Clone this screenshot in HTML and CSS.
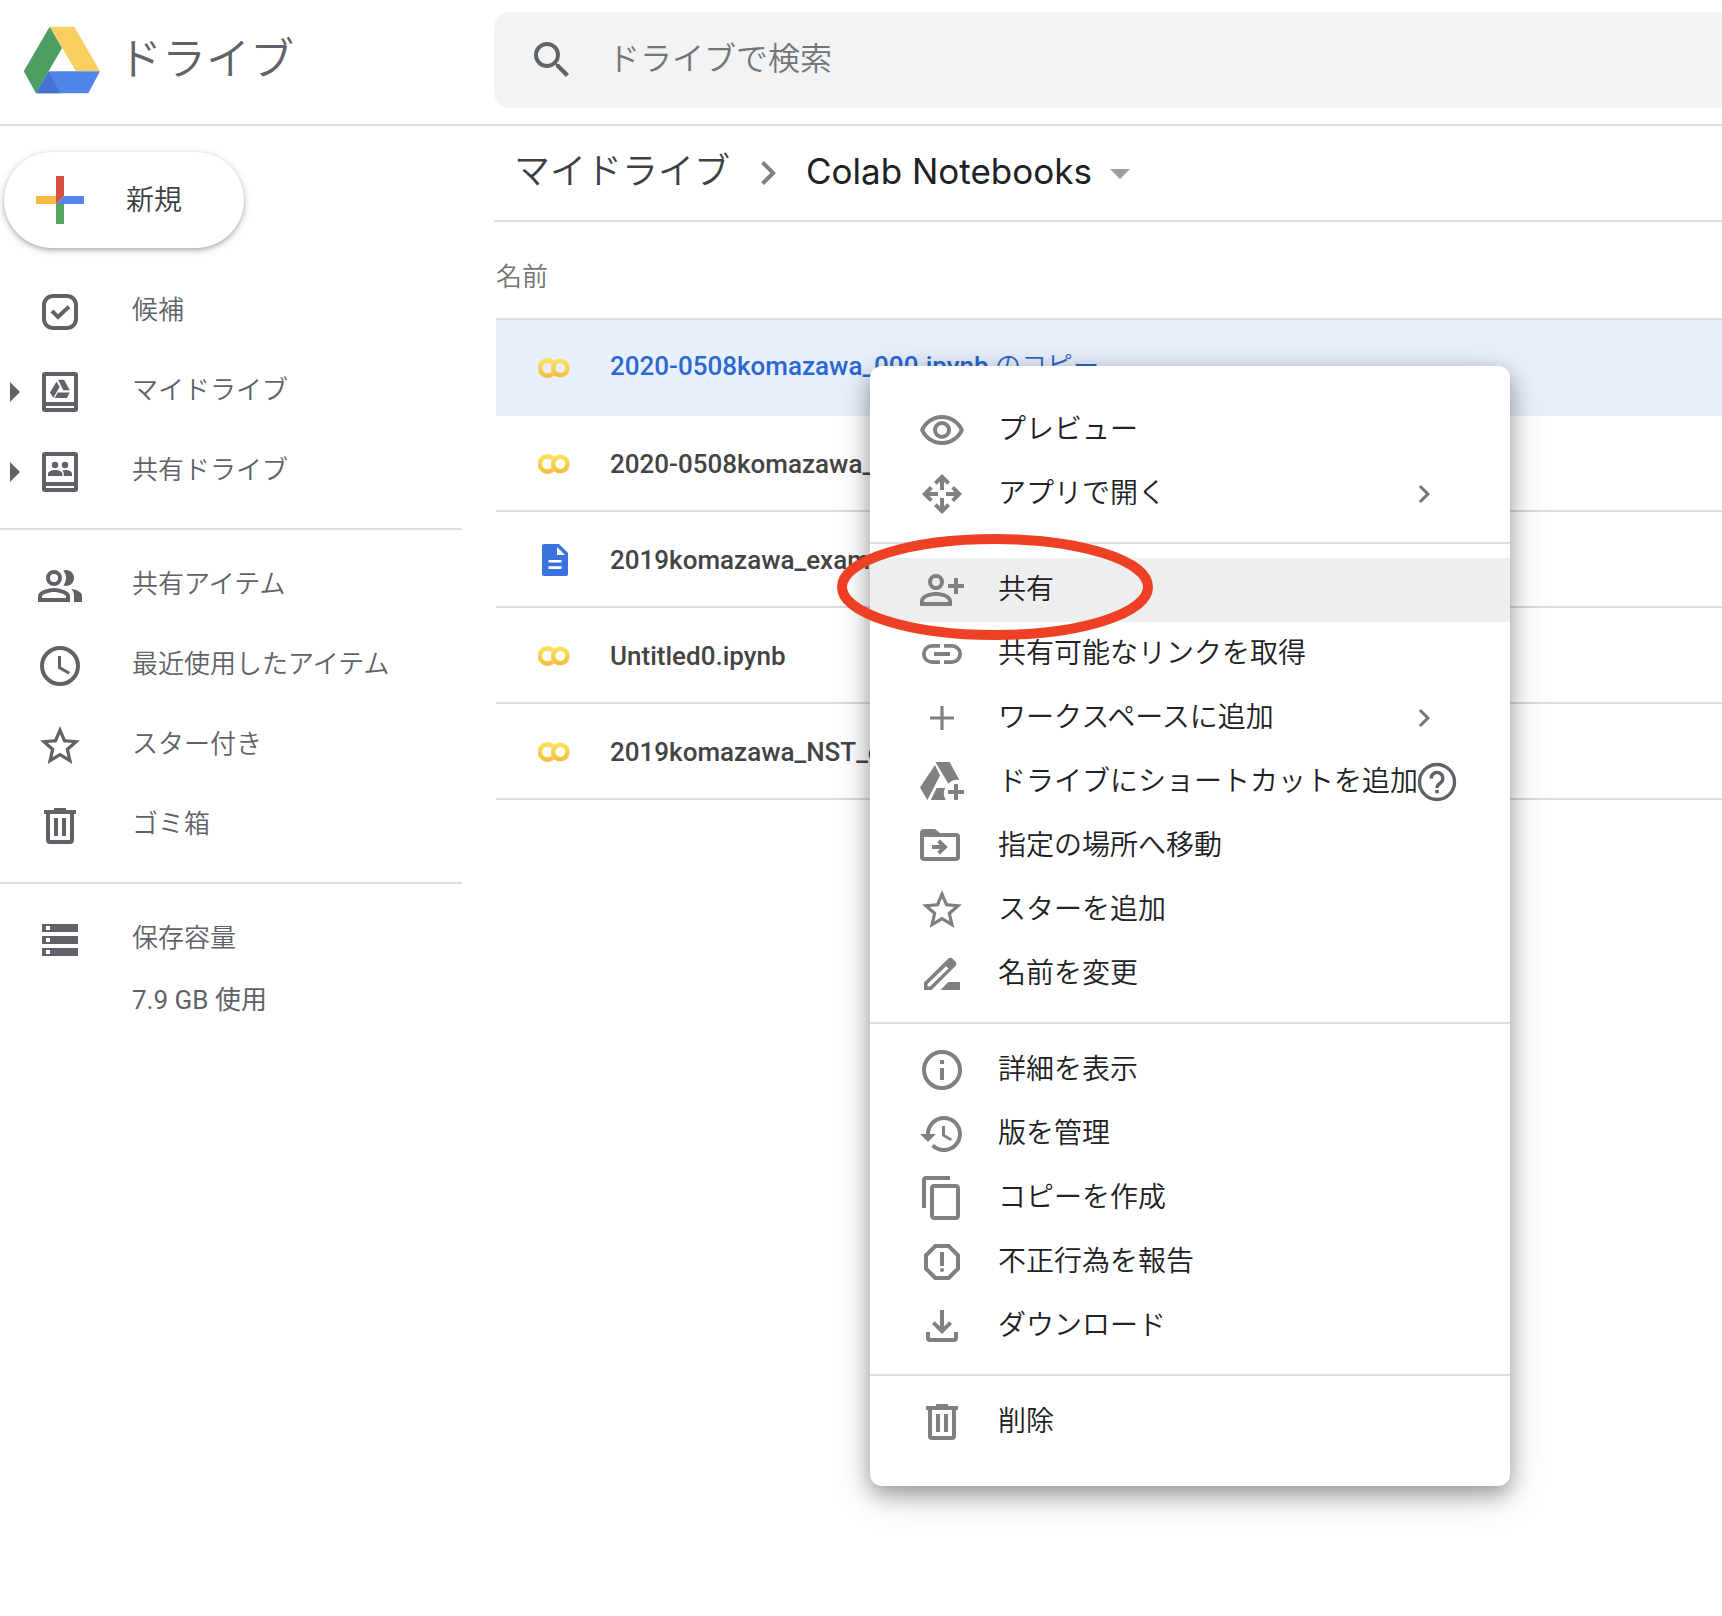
FILE: index.html
```html
<!DOCTYPE html>
<html lang="ja">
<head>
<meta charset="utf-8">
<title>Colab Notebooks - ドライブ</title>
<link rel="stylesheet" href="styles.css">
</head>
<body>
<svg class="sprite" aria-hidden="true">
  <defs>
    <linearGradient id="gold" x1="0" y1="0" x2="0" y2="1">
      <stop offset="0" stop-color="#fbe05c"/><stop offset="1" stop-color="#f5bf41"/>
    </linearGradient>
    <symbol id="colab" viewBox="0 0 32 32">
      <path d="M14.5 10.3A7.6 7.6 0 1 0 14.5 21.7" fill="none" stroke="url(#gold)" stroke-width="4.6"/>
      <circle cx="22.3" cy="16" r="7.2" fill="none" stroke="url(#gold)" stroke-width="4.6"/>
    </symbol>
    <symbol id="star" viewBox="0 0 24 24"><path d="M22 9.24l-7.19-.62L12 2 9.19 8.63 2 9.24l5.46 4.73L5.82 21 12 17.27 18.18 21l-1.63-7.03L22 9.24zM12 15.4l-3.76 2.27 1-4.28-3.32-2.88 4.38-.38L12 6.1l1.71 4.04 4.38.38-3.32 2.88 1 4.28L12 15.4z"/></symbol>
    <symbol id="trash" viewBox="0 0 24 24"><path fill-rule="evenodd" d="M9 3h6v1h5v2h-1v13a2 2 0 0 1-2 2H7a2 2 0 0 1-2-2V6H4V4h5zM7 6v13h10V6zM9 8h2v9H9zM13 8h2v9h-2z"/></symbol>
    <symbol id="chevron" viewBox="0 0 24 24"><path d="M10 6L8.590 7.410 13.170 12l-4.580 4.590L10 18l6-6z"/></symbol>
    <symbol id="caret" viewBox="0 0 24 24"><path d="M10 17l5-5-5-5z"/></symbol>
  </defs>
</svg>

<header class="topbar">
  <a class="brand" href="#">
    <svg class="logo" viewBox="22 20 80 80" aria-hidden="true">
      <path fill="#f9cf60" d="M49.700 26.700H74.300L100 71.300H76z"/>
      <path fill="#4f86ec" d="M48.700 71.300H100L88.300 93.300H36z"/>
      <path fill="#4673d2" d="M48.700 71.300L60 93.300H36z"/>
      <path fill="#4c9e63" d="M49.700 26.700L62 48 36 93.300 23.700 71.300z"/>
    </svg>
    <span>ドライブ</span>
  </a>
  <form class="search" role="search">
    <svg class="icon" viewBox="0 0 24 24" aria-hidden="true"><path d="M15.500 14h-.79l-.28-.27A6.471 6.471 0 0 0 16 9.500 6.500 6.500 0 1 0 9.500 16c1.610 0 3.090-.59 4.230-1.570l.27.28v.79l5 4.990L20.490 19l-4.990-5zm-6 0C7.010 14 5 11.990 5 9.500S7.010 5 9.500 5 14 7.010 14 9.500 11.990 14 9.500 14z"/></svg>
    <input type="search" placeholder="ドライブで検索" aria-label="ドライブで検索">
  </form>
</header>

<div class="layout">
  <aside class="sidebar">
    <button class="new" type="button">
      <svg class="icon" viewBox="0 0 48 48" aria-hidden="true">
        <path fill="#f3bb41" d="M0 20h20v8H0z"/><path fill="#56a45f" d="M20 28h8v20h-8z"/>
        <path fill="#5086ec" d="M28 20h20v8H20z"/><path fill="#d8503f" d="M20 0h8v20l-8 8z"/>
      </svg>
      <span>新規</span>
    </button>
    <nav>
      <ul class="group">
        <li><span class="expand"></span><a href="#"><svg class="icon" viewBox="0 0 24 24"><path fill-rule="evenodd" d="M8.500 3h7A5.500 5.500 0 0 1 21 8.500v7a5.500 5.500 0 0 1-5.500 5.500h-7A5.500 5.500 0 0 1 3 15.500v-7A5.500 5.500 0 0 1 8.500 3zm0 2A3.500 3.500 0 0 0 5 8.500v7A3.500 3.500 0 0 0 8.500 19h7a3.500 3.500 0 0 0 3.500-3.500v-7A3.500 3.500 0 0 0 15.500 5z"/><path d="M8 11.500l3 3 5.500-5.200" fill="none" stroke="currentColor" stroke-width="2"/></svg><span>候補</span></a></li>
        <li><button class="expand" type="button" aria-label="マイドライブを展開"><svg class="icon"><use href="#caret"/></svg></button><a href="#"><svg class="icon" viewBox="0 0 24 24"><path fill-rule="evenodd" d="M4.500 2h15A1.500 1.500 0 0 1 21 3.500v17a1.500 1.500 0 0 1-1.500 1.500h-15A1.500 1.500 0 0 1 3 20.500v-17A1.500 1.500 0 0 1 4.500 2zM5 4v13h14V4zM5 19v1h14v-1z"/><path d="M10.300 6.800l1.500 2.700-3.100 5.400L7 12.200zM11 5.900h3l2.900 5.200h-3.200zM10.900 12.200h6l-1.500 2.800H9.300z"/></svg><span>マイドライブ</span></a></li>
        <li><button class="expand" type="button" aria-label="共有ドライブを展開"><svg class="icon"><use href="#caret"/></svg></button><a href="#"><svg class="icon" viewBox="0 0 24 24"><path fill-rule="evenodd" d="M4.500 2h15A1.500 1.500 0 0 1 21 3.500v17a1.500 1.500 0 0 1-1.500 1.500h-15A1.500 1.500 0 0 1 3 20.500v-17A1.500 1.500 0 0 1 4.500 2zM5 4v13h14V4zM5 19v1h14v-1z"/><circle cx="9.500" cy="8.500" r="1.600"/><circle cx="14.500" cy="8.500" r="1.600"/><path d="M6 14v-1c0-1.300 2-2 3.600-2s3.600.7 3.600 2v1zM13.900 14v-1c0-.7-.3-1.300-.8-1.700 2-.7 4.900 0 4.900 1.700v1z"/></svg><span>共有ドライブ</span></a></li>
      </ul>
      <ul class="group">
        <li><span class="expand"></span><a href="#"><svg class="icon" viewBox="0 0 24 24"><path fill-rule="evenodd" d="M9 4a4 4 0 1 1 0 8 4 4 0 0 1 0-8zm0 2a2 2 0 1 0 0 4 2 2 0 0 0 0-4z"/><path d="M15 12c2.210 0 4-1.790 4-4s-1.790-4-4-4c-.47 0-.91.1-1.330.24C14.500 5.270 15 6.580 15 8s-.5 2.730-1.330 3.760c.42.14.86.24 1.330.24zM17.500 13.400C18.600 14.300 19 15.500 19 17v3h4v-3c0-2-2.700-3.200-5.500-3.600z"/><path fill-rule="evenodd" d="M9 13c-2.670 0-8 1.340-8 4v3h16v-3c0-2.660-5.330-4-8-4zm6 5H3v-.99C3.200 16.290 6.300 15 9 15s5.800 1.290 6 2z"/></svg><span>共有アイテム</span></a></li>
        <li><span class="expand"></span><a href="#"><svg class="icon" viewBox="0 0 24 24"><circle cx="12" cy="12" r="9" fill="none" stroke="currentColor" stroke-width="2"/><path d="M11 7h1.500v5.400l4.500 2.600-.8 1.300L11 13.200z"/></svg><span>最近使用したアイテム</span></a></li>
        <li><span class="expand"></span><a href="#"><svg class="icon"><use href="#star"/></svg><span>スター付き</span></a></li>
        <li><span class="expand"></span><a href="#"><svg class="icon"><use href="#trash"/></svg><span>ゴミ箱</span></a></li>
      </ul>
      <ul class="group">
        <li><span class="expand"></span><a href="#"><svg class="icon" viewBox="0 0 24 24"><path fill-rule="evenodd" d="M3 4h18v4H3zM3 10h18v4H3zM3 16h18v4H3zM5 5v2h2V5zM5 11v2h2v-2zM5 17v2h2v-2z"/></svg><span>保存容量</span></a></li>
      </ul>
      <p class="usage">7.9 GB 使用</p>
    </nav>
  </aside>

  <main class="content">
    <nav class="crumbs" aria-label="パンくずリスト">
      <a href="#">マイドライブ</a>
      <svg class="icon" aria-hidden="true"><use href="#chevron"/></svg>
      <button type="button"><span>Colab Notebooks</span><svg class="icon" viewBox="0 0 24 24" aria-hidden="true"><path d="M7 10l5 5 5-5z"/></svg></button>
    </nav>
    <table class="files">
      <thead><tr><th scope="col" colspan="2">名前</th></tr></thead>
      <tbody>
        <tr class="selected"><td class="kind"><svg class="file-icon"><use href="#colab"/></svg></td><td class="name">2020-0508komazawa_000.ipynb <span class="suffix">のコピー</span></td></tr>
        <tr><td class="kind"><svg class="file-icon"><use href="#colab"/></svg></td><td class="name">2020-0508komazawa_000.ipynb</td></tr>
        <tr><td class="kind"><svg class="file-icon" viewBox="0 0 32 32"><path fill="#3873e0" d="M6 0h15l9 9v21a2 2 0 0 1-2 2H6a2 2 0 0 1-2-2V2a2 2 0 0 1 2-2z"/><path fill="#fff" d="M19 3v8h8zM10.500 16h13v2.600h-13zM10.500 22.300h13v2.600h-13z"/></svg></td><td class="name">2019komazawa_exam</td></tr>
        <tr><td class="kind"><svg class="file-icon"><use href="#colab"/></svg></td><td class="name">Untitled0.ipynb</td></tr>
        <tr><td class="kind"><svg class="file-icon"><use href="#colab"/></svg></td><td class="name">2019komazawa_NST_c</td></tr>
      </tbody>
    </table>
  </main>
</div>

<div class="menu" role="menu">
  <div class="section">
    <button role="menuitem" type="button"><svg class="icon" viewBox="0 0 24 24"><path d="M12 6.500c3.790 0 7.170 2.130 8.820 5.500-1.650 3.370-5.020 5.500-8.820 5.500S4.830 15.370 3.180 12C4.830 8.630 8.210 6.500 12 6.500m0-2C7 4.500 2.730 7.610 1 12c1.730 4.390 6 7.500 11 7.500s9.270-3.110 11-7.500c-1.730-4.390-6-7.500-11-7.500z"/><circle cx="12" cy="12" r="3.500" fill="none" stroke="currentColor" stroke-width="2"/></svg><span>プレビュー</span></button>
    <button role="menuitem" type="button"><svg class="icon" viewBox="0 0 24 24"><path id="arm" d="M12 2L8 6l1.400 1.400L11 5.800V10h2V5.800l1.600 1.600L16 6z"/><use href="#arm" transform="rotate(90 12 12)"/><use href="#arm" transform="rotate(180 12 12)"/><use href="#arm" transform="rotate(270 12 12)"/></svg><span>アプリで開く</span><svg class="more"><use href="#chevron"/></svg></button>
  </div>
  <div class="section">
    <button class="active" role="menuitem" type="button"><svg class="icon" viewBox="0 0 24 24"><circle cx="9" cy="8" r="3" fill="none" stroke="currentColor" stroke-width="2"/><path fill-rule="evenodd" d="M9 13c-2.670 0-8 1.200-8 4.500V20h16v-2.500C17 14.200 11.670 13 9 13zm6 5H3v-.6C3.200 16 6.300 15 9 15s5.800 1 6 2.400zM18 6h2v3h3v2h-3v3h-2v-3h-3V9h3z"/></svg><span>共有</span></button>
    <button role="menuitem" type="button"><svg class="icon" viewBox="0 0 24 24"><path d="M3.900 12c0-1.710 1.390-3.100 3.100-3.100h4V7H7a5 5 0 0 0 0 10h4v-1.900H7c-1.710 0-3.100-1.390-3.100-3.100zM8 13h8v-2H8zm9-6h-4v1.900h4a3.100 3.100 0 0 1 0 6.200h-4V17h4a5 5 0 0 0 0-10z"/></svg><span>共有可能なリンクを取得</span></button>
    <button role="menuitem" type="button"><svg class="icon" viewBox="0 0 24 24"><path d="M11.200 6h1.600v5.200H18v1.600h-5.200V18h-1.600v-5.200H6v-1.600h5.200z"/></svg><span>ワークスペースに追加</span><svg class="more"><use href="#chevron"/></svg></button>
    <button role="menuitem" type="button"><svg class="icon" viewBox="0 0 24 24"><path d="M8.500 3.500L11 8.700 4.700 21 1 14.800zM8.700 2h7.100l4.900 9a6 6 0 0 0-5.500 1.900zM9.300 15h4.300a6 6 0 0 0 .3 6H6.400zM18 13h2v3h3v2h-3v3h-2v-3h-3v-2h3z"/></svg><span>ドライブにショートカットを追加</span><svg class="help" viewBox="0 0 40 40"><circle cx="20" cy="20" r="17.500" fill="none" stroke="currentColor" stroke-width="3.400"/><path d="M14.200 16.500a5.800 5.800 0 1 1 9.200 4.500C21 22.600 20 23.500 20 26" fill="none" stroke="currentColor" stroke-width="3.400"/><path d="M18.200 27.800h3.600V31.200h-3.600z"/></svg></button>
    <button role="menuitem" type="button"><svg class="icon" viewBox="0 0 24 24"><path fill-rule="evenodd" d="M3 3.500h5.500l2.500 2h8a2 2 0 0 1 2 2v10a2 2 0 0 1-2 2H3a2 2 0 0 1-2-2v-12a2 2 0 0 1 2-2zm0 4v10h16v-10zM7 11.500h4L9.600 10.100 11 8.700l3.900 3.800-3.900 3.800-1.400-1.400 1.400-1.400H7z"/></svg><span>指定の場所へ移動</span></button>
    <button role="menuitem" type="button"><svg class="icon"><use href="#star"/></svg><span>スターを追加</span></button>
    <button role="menuitem" type="button"><svg class="icon" viewBox="0 0 24 24"><path fill-rule="evenodd" d="M3 16.200L14.800 4.600a2 2 0 0 1 2.800 0l.9.9a2 2 0 0 1 0 2.800L6.800 20H3zM4.800 17v1.300H6l9.200-9-1.200-1.200zM15.200 16H21v4h-9.800z"/></svg><span>名前を変更</span></button>
  </div>
  <div class="section">
    <button role="menuitem" type="button"><svg class="icon" viewBox="0 0 24 24"><circle cx="12" cy="12" r="9" fill="none" stroke="currentColor" stroke-width="2"/><path d="M11 7h2v2h-2zM11 11h2v6h-2z"/></svg><span>詳細を表示</span></button>
    <button role="menuitem" type="button"><svg class="icon" viewBox="0 0 24 24"><path d="M13 3c-4.970 0-9 4.030-9 9H1l3.890 3.890.07.14L9 12H6c0-3.870 3.130-7 7-7s7 3.130 7 7-3.130 7-7 7c-1.930 0-3.680-.79-4.940-2.060l-1.420 1.420C8.270 19.990 10.510 21 13 21c4.970 0 9-4.030 9-9s-4.030-9-9-9zm-1 5v5l4.280 2.540.72-1.210-3.500-2.080V8H12z"/></svg><span>版を管理</span></button>
    <button role="menuitem" type="button"><svg class="icon" viewBox="0 0 24 24"><path fill-rule="evenodd" d="M16 1H4c-1.100 0-2 .9-2 2v14h2V3h12V1zm3 4H8c-1.100 0-2 .9-2 2v14c0 1.100.9 2 2 2h11c1.100 0 2-.9 2-2V7c0-1.100-.9-2-2-2zm0 16H8V7h11v14z"/></svg><span>コピーを作成</span></button>
    <button role="menuitem" type="button"><svg class="icon" viewBox="0 0 24 24"><path fill-rule="evenodd" d="M15.730 3H8.270L3 8.270v7.460L8.270 21h7.460L21 15.730V8.270L15.730 3zM19 14.900L14.900 19H9.100L5 14.900V9.100L9.100 5h5.800L19 9.100v5.800z"/><path d="M11 7h2v7h-2z"/><circle cx="12" cy="16" r="1"/></svg><span>不正行為を報告</span></button>
    <button role="menuitem" type="button"><svg class="icon" viewBox="0 0 24 24"><path d="M11 4h2v8.200l2.600-2.600L17 11l-5 5-5-5 1.400-1.400 2.600 2.600zM4 15h2v3h12v-3h2v3a2 2 0 0 1-2 2H6a2 2 0 0 1-2-2z"/></svg><span>ダウンロード</span></button>
  </div>
  <div class="section">
    <button role="menuitem" type="button"><svg class="icon"><use href="#trash"/></svg><span>削除</span></button>
  </div>
  <svg class="highlight" viewBox="0 0 316 106" aria-hidden="true"><ellipse cx="158" cy="53" rx="153" ry="48"/></svg>
</div>
</body>
</html>
```
FILE: styles.css
```css
* { box-sizing: border-box; }

body {
  margin: 0;
  position: relative;
  min-height: 100vh;
  background: #fff;
  color: #202124;
  font-family: Roboto, "Noto Sans CJK JP", sans-serif;
  font-size: 26px;
  font-weight: 350;
  line-height: 40px;
}

a { color: inherit; text-decoration: none; }

button {
  padding: 0;
  border: 0;
  background: none;
  color: inherit;
  font: inherit;
  text-align: left;
}

ul, p { margin: 0; padding: 0; list-style: none; }

.sprite { position: absolute; width: 0; height: 0; }

.icon { flex: none; width: 48px; height: 48px; fill: currentColor; }

/* Top bar */
.topbar {
  display: grid;
  grid-template-columns: 494px 1fr;
  height: 126px;
  padding: 12px 0;
  border-bottom: 2px solid #dadce0;
}

.brand {
  display: flex;
  align-items: center;
  gap: 16px;
  padding-left: 22px;
  height: 96px;
  color: #5f6368;
  font-size: 44px;
}

.logo { width: 80px; height: 80px; }

.search {
  display: flex;
  align-items: center;
  gap: 32px;
  height: 96px;
  padding-left: 34px;
  border-radius: 16px 0 0 16px;
  background: #f1f3f4;
  color: #5f6368;
}

.search input {
  flex: 1;
  min-width: 0;
  padding: 0 0 2px;
  border: 0;
  outline: 0;
  background: none;
  font: inherit;
  font-size: 32px;
}

.search input::placeholder { color: #757575; opacity: 1; }

/* Page columns */
.layout { display: grid; grid-template-columns: 494px 1fr; }

/* Sidebar */
.sidebar { padding: 26px 32px 0 0; color: #5f6368; }

.new {
  display: flex;
  align-items: center;
  gap: 42px;
  width: 240px;
  height: 96px;
  margin: 0 0 24px 4px;
  padding-left: 32px;
  border-radius: 48px;
  background: #fff;
  box-shadow: 0 2px 4px rgba(60, 64, 67, .3), 0 2px 8px rgba(60, 64, 67, .2);
  color: #3c4043;
  font-size: 28px;
}

.new span { padding-top: 2px; }

.group { padding-bottom: 16px; }
.group + .group { padding-top: 16px; border-top: 2px solid #dadce0; }
.group:last-of-type { padding-bottom: 0; }

.group li { display: flex; align-items: center; height: 80px; }

.group a { display: flex; align-items: center; gap: 48px; }
.group a span { padding-bottom: 4px; }

.expand { display: flex; width: 36px; height: 48px; }
.expand .icon { margin-left: -10px; }

.usage { padding-left: 132px; font-weight: 400; }

/* File list */
.crumbs {
  display: flex;
  align-items: center;
  gap: 14px;
  height: 96px;
  padding-left: 20px;
  border-bottom: 2px solid #dadce0;
  font-size: 36px;
}

.crumbs a { padding-bottom: 2px; color: #3c4043; }
.crumbs > .icon { color: #808080; }

.crumbs button {
  display: flex;
  align-items: center;
  gap: 4px;
  font-family: Inter, sans-serif;
  font-size: 35px;
  font-weight: 400;
}

.crumbs button span { padding-bottom: 4px; }
.crumbs button .icon { color: #9a9ca1; }

.files {
  width: calc(100% - 2px);
  margin-left: 2px;
  border-spacing: 0;
}

.files th {
  height: 98px;
  padding: 14px 0 0;
  border-bottom: 2px solid #dadce0;
  color: #757575;
  font-weight: 350;
  text-align: left;
}

.files td {
  height: 96px;
  padding: 2px 0 0;
  border-bottom: 2px solid #dadce0;
  color: #444;
  font-weight: 500;
  white-space: nowrap;
}

.files .kind { width: 114px; padding-left: 42px; }
.files .selected td { border-color: #e8f0fe; background: #e8f0fe; color: #2b68cf; }
.files .selected .name { padding: 0 0 2px; }
.suffix { font-weight: 350; }
.file-icon { display: block; width: 32px; height: 32px; }

/* Context menu */
.menu {
  position: absolute;
  top: 366px;
  left: 870px;
  width: 640px;
  padding: 32px 0;
  border-radius: 12px;
  background: #fff;
  box-shadow: 0 8px 20px rgba(0, 0, 0, .3), 0 10px 40px rgba(0, 0, 0, .18);
  font-size: 28px;
}

.section + .section {
  margin-top: 16px;
  padding-top: 14px;
  border-top: 2px solid #dadce0;
}

.menu button {
  display: flex;
  align-items: center;
  width: 100%;
  height: 64px;
  padding-left: 48px;
  padding-right: 52px;
  color: #202124;
  white-space: nowrap;
}

.menu .icon { margin-right: 32px; color: #808080; }
.menu .active { background: #eee; }
.more { width: 36px; height: 36px; margin: 0 16px 0 auto; fill: #757575; }
.help { flex: none; width: 40px; height: 40px; margin-left: -1px; color: #5f6368; fill: currentColor; }

.highlight {
  position: absolute;
  top: 168px;
  left: -33px;
  width: 316px;
  height: 106px;
  fill: none;
  stroke: #ed4025;
  stroke-width: 10px;
  pointer-events: none;
}
```
